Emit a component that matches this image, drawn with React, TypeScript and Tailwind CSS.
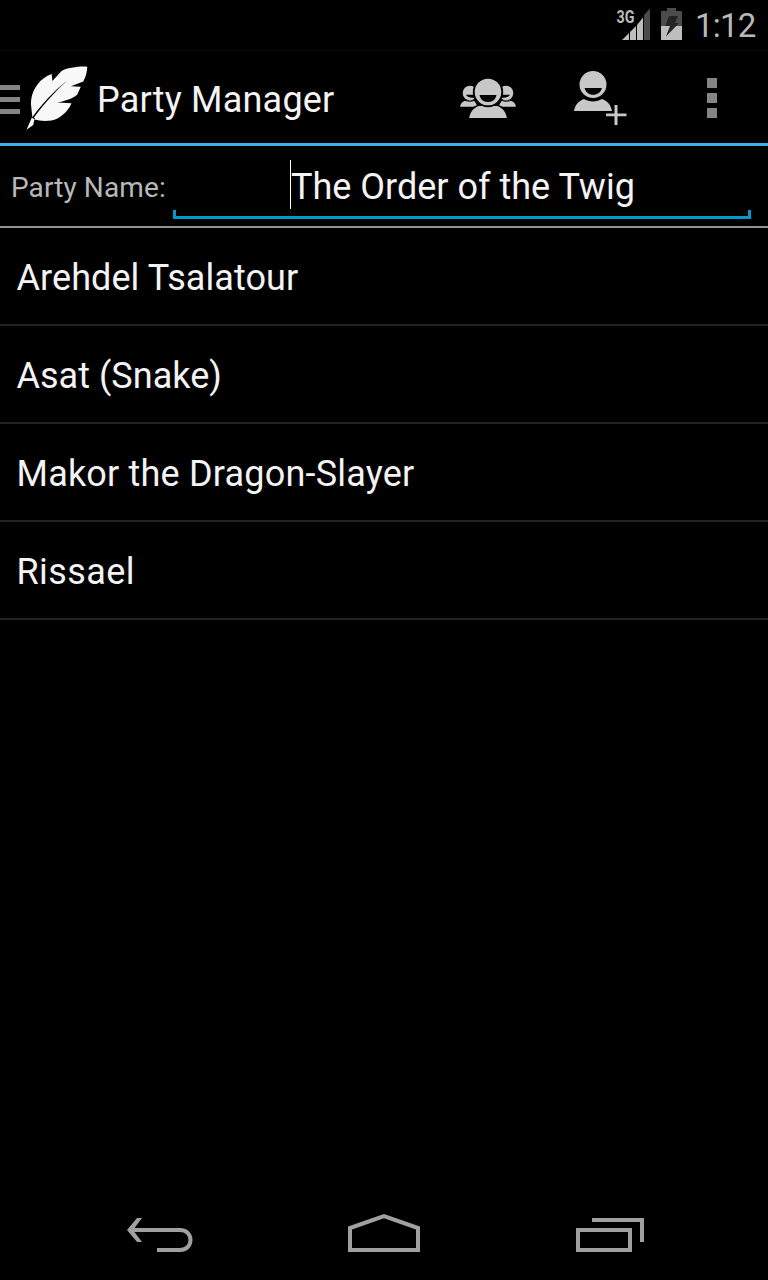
import React from "react";

const members = [
  { name: "Arehdel Tsalatour", tracking: "tracking-[0.07px]" },
  { name: "Asat (Snake)", tracking: "tracking-[0.03px]" },
  { name: "Makor the Dragon-Slayer", tracking: "tracking-[0.2px]" },
  { name: "Rissael", tracking: "tracking-[0.4px]" },
];

function StatusBar() {
  return (
    <div className="flex h-[51px] shrink-0 items-start border-b border-[#0a0a0a] text-[#b8b8b8]">
      <svg className="ml-[614px] h-[50px] w-[72px] shrink-0" viewBox="614 0 72 50">
        <text x="616.5" y="22.700" fontSize="17.500" fontWeight="700" fontFamily="Roboto, sans-serif" textLength="18" lengthAdjust="spacingAndGlyphs" fill="#b8b8b8">3G</text>
        <path d="M622 40L629 33V40ZM630 32L636 26V40H630ZM637 25L643 17.500V40H637Z" fill="#bebebe" />
        <path d="M644 15L650 8.500V40H644Z" fill="#4b4b4b" />
        <path d="M661 11H667V8H676V11H682V26H661Z" fill="#4b4b4b" />
        <path d="M661 26H682V40H661Z" fill="#bebebe" />
        <path d="M669 16H678L675 23H679L666 36.500L670 26H665.500Z" fill="#242424" />
      </svg>
      <span className="ml-[9px] mt-[6px] whitespace-nowrap text-[33px] leading-[40px] tracking-[-0.8px]">1:12</span>
    </div>
  );
}

function PartyIcon() {
  return (
    <svg className="-mt-1 h-[70px] w-[60px] shrink-0" viewBox="458 60 60 70" fill="#c8c8c8">
      <circle cx="470" cy="93" r="7.300" />
      <circle cx="506" cy="93" r="7.300" />
      <path d="M460 106.700C460.500 103.500 462.500 101.500 465.500 100.500H474L478 106.700Z" />
      <path d="M516 106.700C515.500 103.500 513.500 101.500 510.500 100.500H502L498 106.700Z" />
      <path d="M466 94.800H475V97.500C471 98.200 467.200 97.200 466 94.800ZM510 94.800H501V97.500C505 98.200 508.800 97.200 510 94.800Z" fill="#000" />
      <path d="M463.500 99.800C467.500 101.700 472 101.700 475 100M512.500 99.800C508.500 101.700 504 101.700 501 100" fill="none" stroke="#000" strokeWidth="1" />
      <path d="M469.200 118C470 112 473.500 108 478.500 106H497.500C502.500 108 506 112 506.800 118Z" stroke="#000" strokeWidth="3" paintOrder="stroke" />
      <circle cx="488" cy="92" r="15.200" fill="#000" />
      <circle cx="488" cy="92" r="13.300" />
      <path d="M479.500 95H496.500C495.500 99.500 492.500 102 488 102S480.500 99.500 479.500 95Z" fill="#000" />
    </svg>
  );
}

function AddPersonIcon() {
  return (
    <svg className="-mt-1 h-[70px] w-[60px] shrink-0" viewBox="570 60 60 70" fill="#c8c8c8">
      <circle cx="593" cy="84.500" r="13.500" />
      <path d="M584.500 88H602C600.500 92.500 597.500 94.800 593.200 94.800S586 92.500 584.500 88Z" fill="#000" />
      <path d="M574 111C575 105 578.500 101 584 99C589 102.300 597 102.300 602 99C607.500 101 611 105 612 111Z" />
      <path d="M614.500 105H617.500V113.500H626.500V116.300H617.500V125H614.500V116.300H606V113.500H614.500Z" />
    </svg>
  );
}

function ActionBar() {
  return (
    <div className="flex h-[95px] shrink-0 items-center border-b-[3px] border-[#33b5e5] bg-black">
      <svg className="h-[92px] w-[92px] shrink-0" viewBox="0 51 92 92">
        <path d="M0 85H20V90H0ZM0 97H20V102H0ZM0 109H20V114H0Z" fill="#858585" />
        <path d="M87.300 66.800C82 65.800 67 67.500 61.500 71L52.400 81L51.700 74C46 76 41 79.500 37.500 84.500C32.500 91 30.800 98 31 105L32.300 116.500L26.500 129.700L33.200 125L34.400 119.500C42 121.600 51 121.400 57 118.700C64 115 69 109.500 71.500 103.300L57.300 102.500C65 101 73 98.500 77.300 94.500L80.800 86.700L71 86.200L83.300 81.500C86 76.500 87 72 87.300 66.800Z" fill="#f8f8f8" />
        <path d="M67 81C54 90.500 42 104 32.500 117L33.500 118.300C42 106.500 54 92.300 67 81Z" fill="#000" />
        <path d="M67 81C62 84.500 58 88 54 91.700L54.700 92L67 81Z" fill="#888" />
        <path d="M31.500 117L35 119" stroke="#000" />
      </svg>
      <h1 className="ml-[5px] mt-[5px] w-[361px] whitespace-nowrap text-[36px] leading-[42px] tracking-[0.2px]">Party Manager</h1>
      <PartyIcon />
      <div className="w-[52px]" />
      <AddPersonIcon />
      <div className="ml-[77px] mt-[2px] flex flex-col gap-[5px]">
        <div className="h-[10px] w-[10px] bg-[#858585]" />
        <div className="h-[10px] w-[10px] bg-[#858585]" />
        <div className="h-[10px] w-[10px] bg-[#858585]" />
      </div>
    </div>
  );
}

function PartyNameField() {
  return (
    <div className="flex h-[82px] shrink-0 border-b-2 border-[#919191]">
      <label className="mt-[25px] w-[173px] whitespace-nowrap pl-[11px] text-[28px] leading-[34px] tracking-[0.1px] text-[#b8b8b8]">Party Name:</label>
      <div className="flex h-[73px] w-[578px] flex-col">
        <div className="flex h-16 items-start">
          <div className="ml-[117px] mt-[14px] h-[49px] w-px shrink-0 bg-white" />
          <span className="mt-5 whitespace-nowrap text-[36px] leading-[42px]">The Order of the Twig</span>
        </div>
        <div className="h-[9px] border-x-[3px] border-b-[3px] border-[#0099cc]" />
      </div>
    </div>
  );
}

function NavigationBar() {
  return (
    <div className="flex h-24 items-center bg-black">
      <svg className="h-24 w-full" viewBox="0 1184 768 96" fill="none" stroke="#a0a0a0" strokeWidth="4">
        <path d="M130 1230H180C194 1230 194 1250 180 1250H157" />
        <path d="M142 1218H137L127 1230L137 1242H142L133 1230Z" fill="#a0a0a0" stroke="none" />
        <path d="M350 1250V1228L384 1216L418 1228V1250Z" />
        <path d="M578 1230H630V1250H578ZM592 1220H642V1242" />
      </svg>
    </div>
  );
}

export default function App() {
  return (
    <main className="flex h-[1280px] w-[768px] flex-col overflow-hidden bg-black font-[Roboto,sans-serif] text-[#f3f3f3]">
      <StatusBar />
      <ActionBar />
      <PartyNameField />
      <ul className="flex-1">
        {members.map((m) => (
          <li key={m.name} className="flex h-[98px] items-center border-b-2 border-[#222] pl-[16.5px] pt-1 text-[36px] leading-[42px]">
            <span className={m.tracking}>{m.name}</span>
          </li>
        ))}
      </ul>
      <NavigationBar />
    </main>
  );
}
